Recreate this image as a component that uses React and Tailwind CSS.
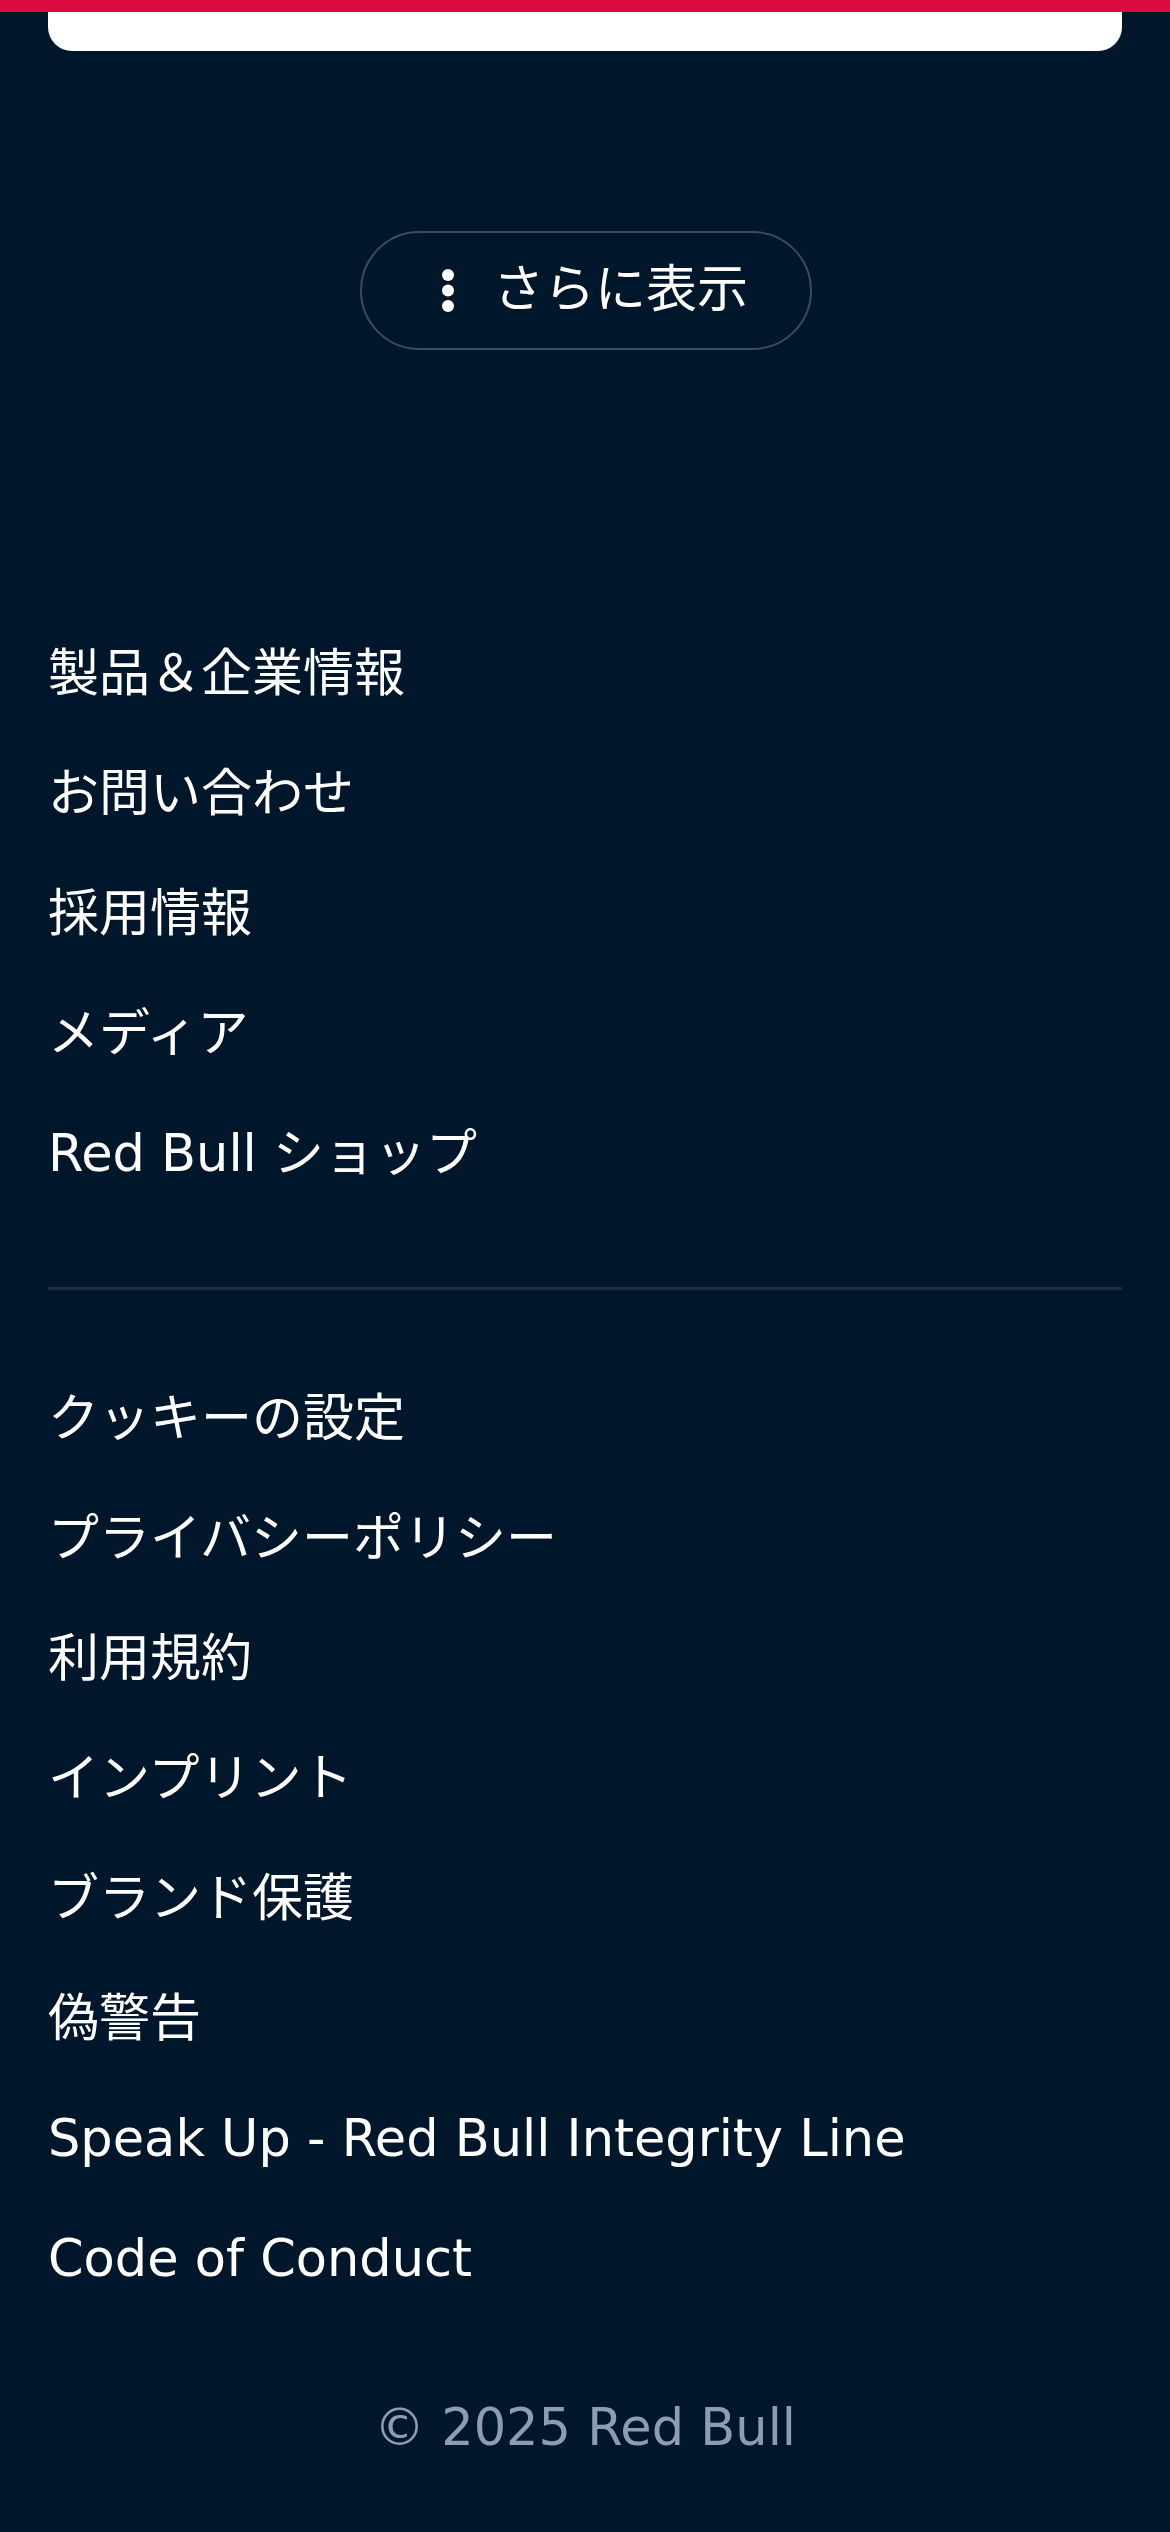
import React from 'react';

const mainLinks = ['製品＆企業情報', 'お問い合わせ', '採用情報', 'メディア', 'Red Bull ショップ'];
const legalLinks = [
  'クッキーの設定',
  'プライバシーポリシー',
  '利用規約',
  'インプリント',
  'ブランド保護',
  '偽警告',
  'Speak Up - Red Bull Integrity Line',
  'Code of Conduct',
];

const DotsIcon = () => (
  <svg width="14" height="44" viewBox="0 0 14 44" fill="white">
    <circle cx="7" cy="6" r="6" />
    <circle cx="7" cy="21.5" r="6" />
    <circle cx="7" cy="37" r="6" />
  </svg>
);

const FooterLink = ({ label }) => (
  <a href="#" className="flex items-center h-[120px] pt-[8px] text-white text-[51px] leading-[76px]">
    {label}
  </a>
);

export default function App() {
  return (
    <div
      className="min-h-[2532px] bg-[#00162b] text-white"
      style={{ fontFamily: '"DejaVu Sans", "Noto Sans CJK JP", sans-serif' }}
    >
      {/* top bar + cut-off card */}
      <div className="h-[12px] bg-[#db0a40]" />
      <div className="px-[48px]">
        <div className="h-[39px] bg-white rounded-b-[24px]" />
      </div>

      {/* show more */}
      <div className="flex justify-center pl-[2px] mt-[180px]">
        <button className="flex items-center gap-[38px] h-[119px] w-[452px] pl-[79px] border-2 border-[#3a4c62] rounded-full text-[51px] text-white">
          <DotsIcon />
          <span>さらに表示</span>
        </button>
      </div>

      <nav className="px-[48px] mt-[260px]">
        {mainLinks.map((l) => (
          <FooterLink key={l} label={l} />
        ))}
        <div className="mt-[77px] h-[3px] bg-[#1a2c42]" />
        <div className="mt-[65px]">
          {legalLinks.map((l) => (
            <FooterLink key={l} label={l} />
          ))}
        </div>
      </nav>

      <p className="mt-[75px] pb-[66px] text-center text-[51px] leading-[76px] text-[#8d9db0]">
        © 2025 Red Bull
      </p>
    </div>
  );
}
